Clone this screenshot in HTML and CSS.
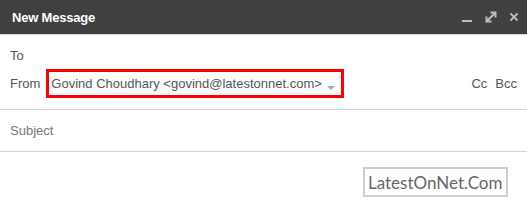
FILE: index.html
```html
<!DOCTYPE html>
<html>
<head>
<meta charset="utf-8">
<link rel="stylesheet" href="styles.css">
</head>
<body>
<div class="compose">
  <div class="header">
    <div class="title">New Message</div>
    <div class="controls">
      <svg class="ico" width="12" height="12" viewBox="0 0 12 12"><rect x="1" y="9" width="10" height="2" fill="#bdbdbd"/></svg>
      <svg class="ico" width="12" height="12" viewBox="0 0 12 12"><path d="M2.5 9.5 L9.5 2.5 M5.5 1.5 H10.5 V6.5 M1.5 5.5 V10.5 H6.5" stroke="#bdbdbd" stroke-width="2" fill="none"/></svg>
      <svg class="ico" width="10" height="10" viewBox="0 0 10 10"><path d="M1.5 1.5 L8.5 8.5 M8.5 1.5 L1.5 8.5" stroke="#bdbdbd" stroke-width="1.8"/></svg>
    </div>
  </div>
  <div class="recips">
    <div class="row to">To</div>
    <div class="row from">
      <span class="label">From</span>
      <span class="sender">Govind Choudhary &lt;govind@latestonnet.com&gt;<span class="caret"></span></span>
      <span class="cc">Cc</span><span class="cc bcc">Bcc</span>
    </div>
  </div>
  <div class="subject">Subject</div>
  <div class="body">
    <div class="mark">LatestOnNet.Com</div>
  </div>
</div>
</body>
</html>
```
FILE: styles.css
```css
html, body { margin: 0; padding: 0; background: #fff; }
body { width: 527px; height: 205px; overflow: hidden; font-family: "Liberation Sans", Arial, sans-serif; }
.compose { display: flex; flex-direction: column; }
.header {
  background: #404040; border-bottom: 1px solid #d8d8d8;
  display: flex; align-items: center; justify-content: space-between;
  padding: 0 8px 0 12px; box-sizing: border-box; height: 35px;
}
.title { color: #fff; font-weight: bold; font-size: 13px; letter-spacing: -0.2px; }
.controls { display: flex; align-items: center; gap: 12px; }
.ico { display: block; }
.recips { border-bottom: 1px solid #d0d0d0; padding: 0 10px; height: 75px; box-sizing: border-box; }
.row { font-size: 13px; color: #555; }
.to { padding-top: 13px; height: 21px; color: #555; }
.from { display: flex; align-items: center; }
.label { margin-right: 6px; }
.sender {
  border: 3px solid #f00; padding: 4px 20px 4px 2px; height: 29px; box-sizing: border-box;
  width: 298px; display: flex; align-items: center; color: #555; white-space: nowrap; position: relative;
  font-size: 13px;
}
.caret {
  position: absolute; right: 6px; top: 14px;
  border-left: 4px solid transparent; border-right: 4px solid transparent; border-top: 4px solid #aaa;
}
.cc { margin-left: auto; color: #555; }
.bcc { margin-left: 8px; }
.subject { height: 42px; border-bottom: 1px solid #d0d0d0; padding: 0 10px; box-sizing: border-box; font-size: 13px; color: #777; display: flex; align-items: center; }
.body { display: flex; justify-content: flex-end; padding: 15px 19px 0 0; }
.mark {
  border: 2px solid #cfcfcf; padding: 0 3px; height: 30px; box-sizing: border-box;
  font-family: "Lato", sans-serif; font-size: 17px; color: #666; display: flex; align-items: center; width: 145px;
  white-space: nowrap;
}
```
